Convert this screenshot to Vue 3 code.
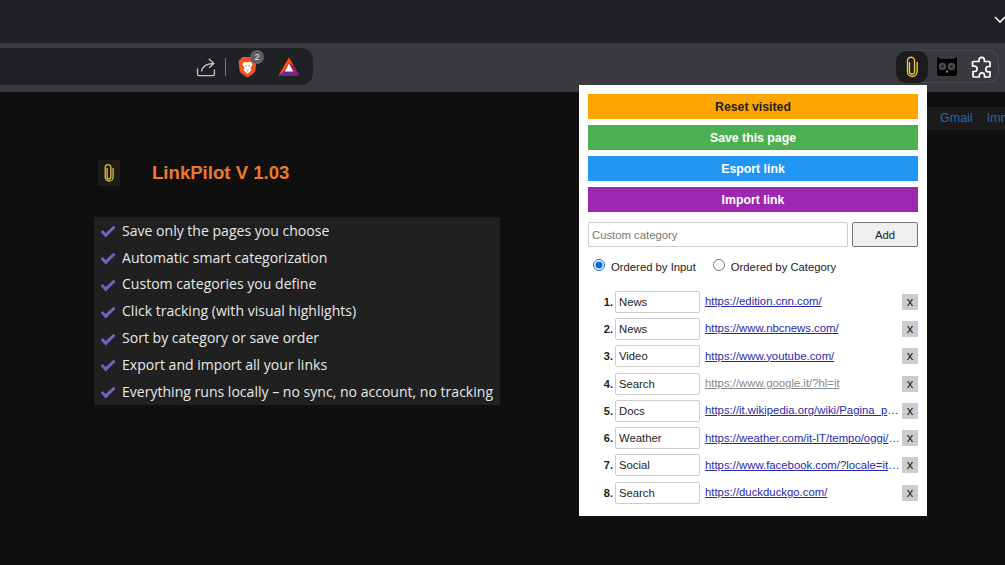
<script setup>
import { ref } from 'vue'

const features = [
  'Save only the pages you choose',
  'Automatic smart categorization',
  'Custom categories you define',
  'Click tracking (with visual highlights)',
  'Sort by category or save order',
  'Export and import all your links',
  'Everything runs locally – no sync, no account, no tracking'
]

const actions = [
  { label: 'Reset visited', color: 'orange' },
  { label: 'Save this page', color: 'green' },
  { label: 'Esport link', color: 'blue' },
  { label: 'Import link', color: 'purple' }
]

const links = [
  { cat: 'News', url: 'https://edition.cnn.com/' },
  { cat: 'News', url: 'https://www.nbcnews.com/' },
  { cat: 'Video', url: 'https://www.youtube.com/' },
  { cat: 'Search', url: 'https://www.google.it/?hl=it', visited: true },
  { cat: 'Docs', url: 'https://it.wikipedia.org/wiki/Pagina_principale' },
  { cat: 'Weather', url: 'https://weather.com/it-IT/tempo/oggi/l/ITXX0067' },
  { cat: 'Social', url: 'https://www.facebook.com/?locale=it_IT&ref=home' },
  { cat: 'Search', url: 'https://duckduckgo.com/' }
]

const order = ref('input')
</script>

<template>
  <div class="page">
    <div class="tabstrip">
      <svg class="chevron" width="12" height="8" viewBox="0 0 12 8"><path d="M1 1l5 5 5-5" fill="none" stroke="#f1f1f1" stroke-width="1.6" /></svg>
    </div>

    <div class="toolbar">
      <div class="omnibox">
        <svg class="share" width="20" height="20" viewBox="0 0 20 20" fill="none" stroke="#c4c6ca" stroke-width="1.3">
          <path d="M1.500 11.500v5.700c0 .9.600 1.400 1.400 1.400H17c.9 0 1.400-.5 1.400-1.400v-4.700" />
          <path d="M5.500 14.500C6.500 9.500 10 6.800 17 6.500M12.800 1.800 17.800 6.400 13.200 10.800" />
        </svg>
        <span class="sep"></span>
        <div class="brave">
          <svg width="19" height="22" viewBox="0 0 19 22">
            <path d="M4.500 1h10l2 2.300 2 1.200-1 9.500c-.4 2-1.400 3-3 4.200L9.500 21.500 4.500 18.200c-1.600-1.200-2.600-2.200-3-4.200l-1-9.500 2-1.200z" fill="#f1561f" />
            <path d="M5.500 6.500 8 6l1.500.6L11 6l2.500.5 1 2-2 3.500 1 2-2.500 2.500-1.500 1.200L8 16.500 5.500 14l1-2-2-3.500z" fill="#fff" />
            <path d="M7 9.500l1.500.7M12 9.500l-1.500.7M8.500 14l1 .8 1-.8" stroke="#f1561f" stroke-width="1" fill="none" />
          </svg>
          <span class="badge">2</span>
        </div>
        <svg class="bat" width="22" height="19" viewBox="0 0 22 19">
          <path d="M11 .5 21.500 18.500H.5z" fill="#9e1f63" />
          <path d="M11 .5 15.500 8.500 11 6 6 14 .5 18.500z" fill="#ff5000" />
          <path d="M.5 18.500 6.500 14.500H15.500L21.500 18.500z" fill="#662d91" />
          <path d="M11 6.500 15.200 14.500H6.800z" fill="#fff" />
        </svg>
      </div>

      <div class="extensions">
        <div class="ext-active">
          <svg width="16" height="22" viewBox="0 0 16 22" fill="none" stroke="#e7c342" stroke-width="1.4" stroke-linecap="round">
            <path d="M5.500 6.500v9.300a2.500 2.500 0 0 0 5 0V4.700a3.500 3.500 0 0 0-7 0v11a4.800 4.800 0 0 0 9.600 0V6.500" />
          </svg>
        </div>
        <svg class="owl" width="20" height="20" viewBox="0 0 20 20">
          <path d="M0 0l4 2h12l4-2v16c0 2-.5 3-2.500 3h-15C.5 19 0 18 0 16z" fill="#000" />
          <circle cx="5.500" cy="9.500" r="3.800" fill="#4a4a4a" />
          <circle cx="14.500" cy="9.500" r="3.800" fill="#4a4a4a" />
          <circle cx="5.500" cy="9.500" r="1.400" fill="#222" />
          <circle cx="14.500" cy="9.500" r="1.400" fill="#222" />
          <path d="M8.500 13.500h3L10 16.500z" fill="#888" />
        </svg>
        <svg class="puzzle" width="22" height="22" viewBox="0 0 22 22" fill="none" stroke="#fff" stroke-width="1.7" stroke-linejoin="round">
          <path d="M8 5.500V4a2.700 2.700 0 0 1 5.400 0v1.500H18a1 1 0 0 1 1 1v4h-1.500a2.700 2.700 0 0 0 0 5.400H19V20a1 1 0 0 1-1 1H13.500v-1.500a2.600 2.600 0 0 0-5.200 0V21H3a1 1 0 0 1-1-1v-4.500h1.400a2.700 2.700 0 0 0 0-5.400H1.500V6.500a1 1 0 0 1 1-1z" />
        </svg>
      </div>
    </div>

    <main class="content">
      <div class="bookmarks">
        <a>Gmail</a>
        <a>Immagini</a>
      </div>

      <div class="intro">
        <div class="title-row">
          <span class="logo">
            <svg width="12" height="20" viewBox="0 0 16 26" fill="none" stroke="#e7c342" stroke-width="1.700" stroke-linecap="round">
              <path d="M5.500 7v11.500a2.500 2.500 0 0 0 5 0V5a3.800 3.800 0 0 0-7.500 0v13.500a5.200 5.200 0 0 0 10.500 0V7" />
            </svg>
          </span>
          <h1>LinkPilot V 1.03</h1>
        </div>
        <ul class="features">
          <li v-for="f in features" :key="f">
            <svg width="16" height="13" viewBox="0 0 16 13"><path d="M.7 7l2-2 3 3L13.500.8 15.500 2.800 5.700 12.500z" fill="#7a5cc4" /></svg>
            <span>{{ f }}</span>
          </li>
        </ul>
      </div>
    </main>

    <div class="popup">
      <button v-for="a in actions" :key="a.label" class="action" :class="a.color">{{ a.label }}</button>

      <div class="add-row">
        <input class="cat-input" placeholder="Custom category" />
        <button class="add">Add</button>
      </div>

      <div class="order">
        <label><input v-model="order" type="radio" value="input" /> Ordered by Input</label>
        <label><input v-model="order" type="radio" value="category" /> Ordered by Category</label>
      </div>

      <div class="list">
        <div v-for="(l, i) in links" :key="i" class="row">
          <b class="num">{{ i + 1 }}.</b>
          <input class="row-cat" :value="l.cat" />
          <a class="url" :class="{ visited: l.visited }" href="#">{{ l.url }}</a>
          <span class="del">x</span>
        </div>
      </div>
    </div>
  </div>
</template>

<style>
html, body {
  margin: 0;
  background: #0f0f0f;
  overflow: hidden;
}
</style>

<style scoped>
.page {
  position: relative;
  width: 1005px;
  height: 565px;
  overflow: hidden;
  display: flex;
  flex-direction: column;
  background: #0f0f0f;
  font-family: "Liberation Sans", Arial, sans-serif;
}

.tabstrip {
  height: 43px;
  flex: none;
  background: #202127;
  display: flex;
  justify-content: flex-end;
}
.chevron {
  margin: 16px -1px 0 0;
}

.toolbar {
  height: 49px;
  flex: none;
  background: #393a40;
  display: flex;
  justify-content: space-between;
  align-items: flex-start;
}
.omnibox {
  width: 313px;
  height: 37px;
  margin-top: 5px;
  background: #202124;
  border-radius: 0 12px 12px 0;
  display: flex;
  align-items: center;
  justify-content: flex-end;
  box-sizing: border-box;
  padding-right: 13px;
}
.share {
  margin-right: 9px;
  margin-top: 1px;
}
.sep {
  width: 1px;
  height: 18px;
  background: #77787c;
  margin-right: 12px;
}
.brave {
  position: relative;
  width: 19px;
  height: 22px;
  margin-right: 21px;
  margin-top: 1px;
}
.badge {
  position: absolute;
  left: 12px;
  top: -6px;
  width: 14px;
  height: 14px;
  border-radius: 50%;
  background: #5d5f66;
  color: #e8e8e8;
  font-size: 9px;
  line-height: 14px;
  text-align: center;
}
.extensions {
  width: 103px;
  height: 33px;
  margin: 7px 6px 0 0;
  border: 1px solid #4a4b50;
  border-left: none;
  border-radius: 11px;
  box-sizing: border-box;
  display: flex;
  align-items: center;
  position: relative;
}
.ext-active {
  width: 32px;
  height: 32px;
  background: #1c1c1e;
  border-radius: 10px;
  display: flex;
  align-items: center;
  justify-content: center;
  margin-right: 9px;
}
.owl {
  margin-right: 14px;
}

.content {
  flex: 1;
  position: relative;
}
.bookmarks {
  height: 23px;
  margin: 15px 0 0 927px;
  padding-left: 13px;
  display: flex;
  gap: 14px;
  overflow: hidden;
  background: #1b1b1b;
  font-size: 12.500px;
  line-height: 22px;
  color: #256aa6;
  white-space: nowrap;
}
.intro {
  margin: 30px 0 0 94px;
  width: 406px;
}
.title-row {
  display: flex;
  align-items: center;
  gap: 32px;
  padding-left: 4px;
}
.logo {
  width: 22px;
  height: 26px;
  background: #1c1b14;
  display: flex;
  align-items: center;
  justify-content: center;
}
h1 {
  margin: 0;
  font-size: 18.600px;
  font-weight: 700;
  color: #ea7a2e;
}
.features {
  list-style: none;
  margin: 31px 0 0;
  height: 188px;
  box-sizing: border-box;
  padding: 0 0 0 6px;
  background: #202020;
  color: #e8e8e8;
  font-family: "Open Sans", sans-serif;
  font-size: 14.050px;
  white-space: nowrap;
}
.features li {
  height: 26.800px;
  display: flex;
  align-items: center;
  gap: 6px;
}
.features svg {
  margin-top: 3px;
  flex: none;
}

.popup {
  position: absolute;
  left: 579px;
  top: 85px;
  width: 348px;
  height: 431px;
  box-sizing: border-box;
  background: #fff;
  padding: 9px 9px 0;
  display: flex;
  flex-direction: column;
  font-family: "Liberation Sans", Arial, sans-serif;
}
.action {
  height: 25px;
  margin-bottom: 6px;
  border: none;
  padding: 0;
  color: #fff;
  font: 700 12.300px "Liberation Sans", Arial, sans-serif;
}
.action.orange {
  background: #ffa500;
  color: #222;
}
.action.green {
  background: #4caf50;
}
.action.blue {
  background: #2196f3;
}
.action.purple {
  background: #9c27b0;
}
.add-row {
  display: flex;
  gap: 4px;
  margin-top: 4px;
}
.cat-input {
  width: 260px;
  height: 25px;
  box-sizing: border-box;
  border: 1px solid #ccc;
  border-radius: 2px;
  padding: 0 3px;
  font: 11.300px "Liberation Sans", Arial, sans-serif;
  outline: none;
}
.cat-input::placeholder {
  color: #777;
}
.add {
  width: 66px;
  height: 25px;
  background: #efefef;
  border: 1px solid #767676;
  border-radius: 2px;
  padding: 0;
  color: #222;
  font: 11.300px "Liberation Sans", Arial, sans-serif;
}
.order {
  display: flex;
  gap: 17px;
  margin: 13px 0 0 5px;
  font-size: 11.300px;
  color: #222;
  height: 14px;
}
.order label {
  display: flex;
  align-items: center;
  gap: 5px;
  white-space: nowrap;
}
.order input {
  margin: 0 1px 4px 0;
  width: 12px;
  height: 12px;
  accent-color: #0b6fd6;
}
.list {
  margin-top: 14px;
}
.row {
  height: 27.300px;
  display: flex;
  align-items: center;
  font-size: 11.350px;
}
.num {
  width: 25px;
  flex: none;
  text-align: right;
  margin-right: 2px;
  color: #222;
  font-size: 11px;
}
.row-cat {
  width: 85px;
  height: 22px;
  flex: none;
  box-sizing: border-box;
  border: 1px solid #ccc;
  border-radius: 2px;
  padding: 0 3px;
  color: #222;
  font: 11.300px "Liberation Sans", Arial, sans-serif;
  outline: none;
}
.url {
  flex: 1;
  min-width: 0;
  margin: 0 0 1px 5px;
  color: #2a2aa8;
  text-decoration: underline;
  white-space: nowrap;
  overflow: hidden;
  text-overflow: ellipsis;
}
.url.visited {
  color: #888;
}
.del {
  width: 16px;
  height: 16px;
  flex: none;
  background: #ccc;
  text-align: center;
  color: #222;
  font-size: 13px;
  line-height: 16px;
}
</style>
